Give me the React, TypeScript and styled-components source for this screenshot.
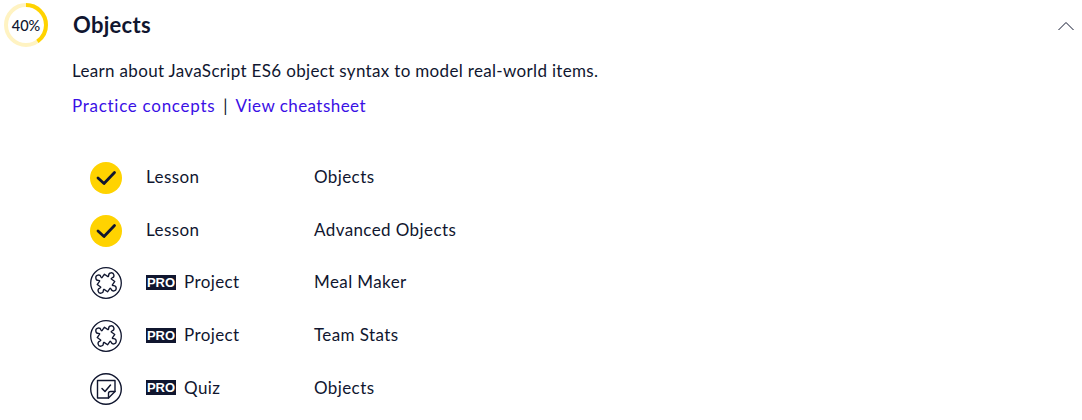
import React from "react";
import styled, { createGlobalStyle } from "styled-components";

const Global = createGlobalStyle`
  html, body { margin: 0; padding: 0; background: #fff; }
  body { font-family: "Lato", "Liberation Sans", sans-serif; color: #10162f; overflow: hidden; }
`;
const Page = styled.div`
  width: 1082px; height: 420px; overflow: hidden; box-sizing: border-box; padding: 3px 0 0 4px;
`;
const Header = styled.header`
  display: flex; align-items: center; height: 44px;
`;
const Ring = styled.div`
  position: relative; width: 44px; height: 44px; flex: none;
`;
const RingLabel = styled.span`
  position: absolute; inset: 0; display: flex; align-items: center; justify-content: center;
  font-size: 14.5px; font-weight: 500;
`;
const Title = styled.h2`
  margin: -2px 0 0 25px; font-size: 22px; font-weight: 700; letter-spacing: 0.3px; flex: 1; color: #10162f;
`;
const Chevron = styled.svg`
  width: 18px; height: 10px; margin: 2px 7px 0 0; flex: none;
`;
const Body = styled.div`
  padding-left: 68px;
`;
const Description = styled.p`
  margin: 13px 0 0; font-size: 17px; line-height: 22px; letter-spacing: 0.33px;
`;
const Links = styled.div`
  margin-top: 13px; font-size: 17px; line-height: 22px; display: flex; gap: 8px;
`;
const Link = styled.a<{ $tracking: number }>`
  color: #3a10e5; text-decoration: none; letter-spacing: ${(p) => p.$tracking}px;
`;
const List = styled.ul`
  list-style: none; margin: 33px 0 0; padding: 0 0 0 18px;
`;
const Row = styled.li`
  display: grid; grid-template-columns: 32px 144px 1fr; column-gap: 24px; align-items: center; height: 52.75px;
  font-size: 17px; letter-spacing: 0.4px;
`;
const Kind = styled.span`
  display: flex; align-items: center; gap: 8px;
`;
const Pro = styled.span`
  background: #10162f; color: #fff; font-family: "Liberation Sans", sans-serif; font-weight: 700; font-size: 13px;
  letter-spacing: 0; line-height: 15px; width: 30px; height: 15px; text-align: center; display: block; margin-top: 1px;
`;
const Icon = styled.svg`
  width: 32px; height: 32px; display: block; margin-top: 3px;
`;

const Check = () => (
  <Icon viewBox="0 0 32 32">
    <circle cx="16" cy="16" r="16" fill="#ffd300" />
    <path d="M8 16l6 5.500L24.500 10.500" fill="none" stroke="#10162f" strokeWidth="2.800" strokeLinecap="round" strokeLinejoin="round" />
  </Icon>
);
const Puzzle = () => (
  <Icon viewBox="0 0 32 32" fill="none" stroke="#10162f" strokeWidth="1.300" strokeLinejoin="round">
    <circle cx="16" cy="16" r="15.300" />
    <g transform="translate(16 16) rotate(35) scale(1.150) translate(-16 -16)" strokeWidth="1.150">
      <path d="M10.500 10.500H14.200C14.600 10.500 14.400 9.800 14.200 9.400A2.300 2.300 0 1 1 17.800 9.400C17.600 9.800 17.400 10.500 17.800 10.500H21.500V14.200C21.500 14.600 22.200 14.400 22.600 14.200A2.300 2.300 0 1 1 22.600 17.800C22.200 17.600 21.500 17.400 21.500 17.800V21.500H17.800C17.400 21.500 17.600 22.200 17.800 22.600A2.300 2.300 0 1 1 14.200 22.600C14.400 22.200 14.600 21.500 14.200 21.500H10.500V17.800C10.500 17.400 9.800 17.600 9.400 17.800A2.300 2.300 0 1 1 9.400 14.200C9.800 14.400 10.500 14.600 10.500 14.200Z" />
    </g>
  </Icon>
);
const Note = () => (
  <Icon viewBox="0 0 32 32" fill="none" stroke="#10162f" strokeWidth="1.400" strokeLinejoin="round" strokeLinecap="round">
    <circle cx="16" cy="16" r="15.300" />
    <path d="M7.500 7.500h17.500v11l-6.500 6.500H7.500z" />
    <path d="M25 18.500h-4.500a2 2 0 0 0-2 2V25" />
    <path d="M12 15.500l3 3 5.500-6.500" strokeWidth="1.500" />
  </Icon>
);

const rows = [
  { icon: <Check />, pro: false, kind: "Lesson", name: "Objects" },
  { icon: <Check />, pro: false, kind: "Lesson", name: "Advanced Objects" },
  { icon: <Puzzle />, pro: true, kind: "Project", name: "Meal Maker" },
  { icon: <Puzzle />, pro: true, kind: "Project", name: "Team Stats" },
  { icon: <Note />, pro: true, kind: "Quiz", name: "Objects" },
];

export default function App() {
  return (
    <Page>
      <Global />
      <Header>
        <Ring>
          <svg width="44" height="44" viewBox="0 0 44 44" fill="none">
            <circle cx="22" cy="22" r="20" stroke="#fff3c2" strokeWidth="4" />
            <circle cx="22" cy="22" r="20" stroke="#ffd300" strokeWidth="4" strokeDasharray="50.270 125.660" transform="rotate(-90 22 22)" />
          </svg>
          <RingLabel>40%</RingLabel>
        </Ring>
        <Title>Objects</Title>
        <Chevron viewBox="0 0 18 10" fill="none" stroke="#10162f" strokeWidth="1">
          <path d="M1.500 9L9 1.500 16.500 9" />
        </Chevron>
      </Header>
      <Body>
        <Description>Learn about JavaScript ES6 object syntax to model real-world items.</Description>
        <Links>
          <Link href="#" $tracking={0.72}>Practice concepts</Link>
          <span>|</span>
          <Link href="#" $tracking={0.45}>View cheatsheet</Link>
        </Links>
        <List>
          {rows.map((r, i) => (
            <Row key={i}>
              {r.icon}
              <Kind>
                {r.pro && <Pro>PRO</Pro>}
                {r.kind}
              </Kind>
              <span>{r.name}</span>
            </Row>
          ))}
        </List>
      </Body>
    </Page>
  );
}
